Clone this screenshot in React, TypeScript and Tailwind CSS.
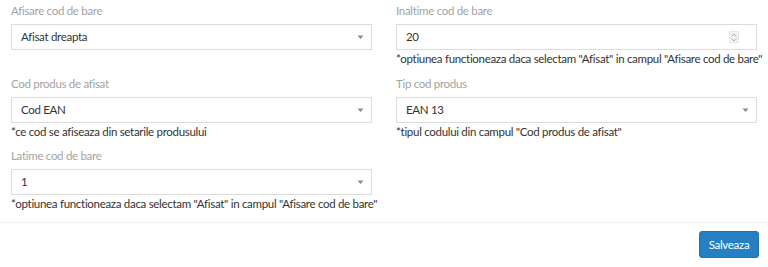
import React from 'react';

const font = { fontFamily: 'Lato, "Liberation Sans", sans-serif', letterSpacing: '-0.3px' };

function Label({ children }: { children: React.ReactNode }) {
  return <div className="text-[11.5px] leading-[14px] text-[#a3a3a3] h-[14px]">{children}</div>;
}

function Help({ children }: { children: React.ReactNode }) {
  return <div className="text-[11.5px] leading-[15px] text-[#333] mt-[1px] whitespace-nowrap">{children}</div>;
}

function Caret() {
  return (
    <svg width="7" height="5" viewBox="0 0 7 5" className="mr-[2px]">
      <path d="M0.5 0.5 L6.5 0.5 L3.5 4 Z" fill="#8a8a8a" />
    </svg>
  );
}

function Select({ value }: { value: string }) {
  return (
    <div className="mt-[6px] h-[26px] border border-[#dcdcdc] bg-white flex items-center justify-between pl-[9px] pr-[5px] text-[11.5px] text-[#333]">
      <span>{value}</span>
      <Caret />
    </div>
  );
}

function NumberInput({ value }: { value: string }) {
  return (
    <div className="mt-[6px] h-[26px] border border-[#dcdcdc] bg-white flex items-center justify-between pl-[9px] pr-[17px] text-[11.5px] text-[#333]">
      <span>{value}</span>
      <div className="w-[10px] h-[12px] bg-[#f2f2f2] border border-[#e6e6e6] rounded-[1px] flex flex-col items-center justify-center gap-[1px]">
        <svg width="6" height="4" viewBox="0 0 6 4">
          <path d="M0.5 3.5 L3 1 L5.5 3.5" fill="none" stroke="#a0a0a0" strokeWidth="0.8" />
        </svg>
        <svg width="6" height="4" viewBox="0 0 6 4">
          <path d="M0.5 0.5 L3 3 L5.5 0.5" fill="none" stroke="#a0a0a0" strokeWidth="0.8" />
        </svg>
      </div>
    </div>
  );
}

export default function App() {
  return (
    <div className="w-[768px] h-[267px] bg-white" style={font}>
      <div className="px-[11px] pt-[4px] grid grid-cols-2 gap-x-[24px]">
        {/* rand 1 */}
        <div className="h-[73px]">
          <Label>Afisare cod de bare</Label>
          <Select value="Afisat dreapta" />
        </div>
        <div className="h-[73px]">
          <Label>Inaltime cod de bare</Label>
          <NumberInput value="20" />
          <Help>*optiunea functioneaza daca selectam "Afisat" in campul "Afisare cod de bare"</Help>
        </div>
        {/* rand 2 */}
        <div className="h-[72px]">
          <Label>Cod produs de afisat</Label>
          <Select value="Cod EAN" />
          <Help>*ce cod se afiseaza din setarile produsului</Help>
        </div>
        <div className="h-[72px]">
          <Label>Tip cod produs</Label>
          <Select value="EAN 13" />
          <Help>*tipul codului din campul "Cod produs de afisat"</Help>
        </div>
        {/* rand 3 */}
        <div className="h-[73px]">
          <Label>Latime cod de bare</Label>
          <Select value="1" />
          <Help>*optiunea functioneaza daca selectam "Afisat" in campul "Afisare cod de bare"</Help>
        </div>
        <div />
      </div>
      <div className="border-t border-[#f0f0f0] flex justify-end pr-[9px] pt-[8px]">
        <button className="h-[27px] w-[60px] rounded-[3px] bg-[#2580c3] border border-[#1f72ae] text-white text-[11.5px]">
          Salveaza
        </button>
      </div>
    </div>
  );
}
